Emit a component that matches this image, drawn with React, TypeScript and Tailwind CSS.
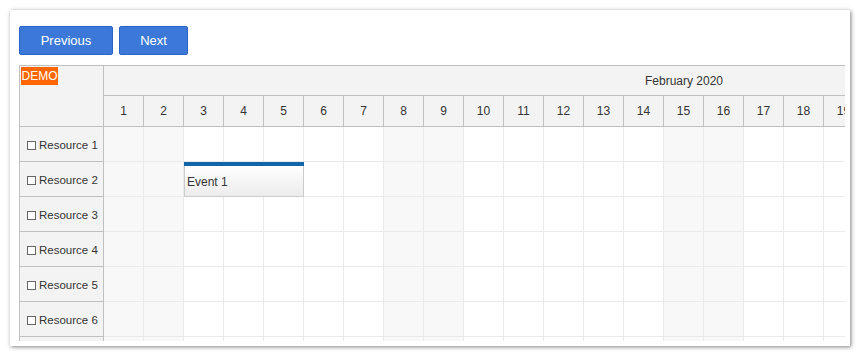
import React from 'react'

// only the days that fit in the visible viewport are drawn; the month header keeps its full 29-day width
const days = Array.from({ length: 19 }, (_, i) => i + 1)
const resources = ['Resource 1', 'Resource 2', 'Resource 3', 'Resource 4', 'Resource 5', 'Resource 6', '']

// Feb 1 2020 is a Saturday
const isWeekend = (d: number) => d % 7 === 1 || d % 7 === 2

export default function App() {
    return (
        <div className="w-[860px] h-[356px] bg-white overflow-hidden" style={{ fontFamily: '"Liberation Sans", Arial, sans-serif' }}>
            <div className="m-[10px] w-[840px] h-[336px] bg-white shadow-[1px_1px_4px_rgba(0,0,0,0.5)] pt-[16px] pl-[9px] flex flex-col">
                <div className="flex gap-[6px]">
                    <button className="w-[94px] h-[29px] rounded-[2px] bg-[#3c78d8] border border-[#2a63c5] text-white text-[13px]">Previous</button>
                    <button className="w-[69px] h-[29px] rounded-[2px] bg-[#3c78d8] border border-[#2a63c5] text-white text-[13px]">Next</button>
                </div>

                <div className="mt-[10px] w-[826px] h-[276px] overflow-hidden flex border-l border-t border-[#c0c0c0] text-[#333]">
                    <div className="w-[84px] shrink-0 flex flex-col">
                        <div className="h-[61px] shrink-0 bg-[#f3f3f3] border-r border-b border-[#c0c0c0] p-[1px]">
                            <div className="w-[37px] h-[18px] bg-[#ff6600] text-white text-[12px] leading-[18px] text-center">DEMO</div>
                        </div>
                        {resources.map((r, i) => (
                            <div key={i} className="h-[35px] shrink-0 bg-[#f3f3f3] border-r border-b border-[#c0c0c0] flex items-center pl-[7px] pt-[3px] gap-[3px] text-[11.5px]">
                                {r && (
                                    <>
                                        <span className="w-[9px] h-[9px] border border-[#666] bg-white" />
                                        <span>{r}</span>
                                    </>
                                )}
                            </div>
                        ))}
                    </div>

                    <div className="flex-1 overflow-hidden">
                        <div className="w-[1160px] relative">
                            <div className="h-[30px] bg-[#f3f3f3] border-b border-[#c0c0c0] flex items-center justify-center text-[12px]">
                                February 2020
                            </div>
                            <div className="h-[31px] flex">
                                {days.map((d) => (
                                    <div key={d} className="w-[40px] shrink-0 bg-[#f3f3f3] border-r border-b border-[#c0c0c0] flex items-center justify-center text-[12px]">
                                        {d}
                                    </div>
                                ))}
                            </div>
                            {resources.map((r, i) => (
                                <div key={i} className="h-[35px] flex">
                                    {days.map((d) => (
                                        <div
                                            key={d}
                                            className={`w-[40px] shrink-0 border-r border-b border-[#eaeaea] ${isWeekend(d) ? 'bg-[#f8f8f8]' : 'bg-white'}`}
                                        />
                                    ))}
                                </div>
                            ))}

                            <div className="absolute left-[80px] top-[96px] w-[120px] h-[35px] flex flex-col">
                                <div className="h-[4px] bg-[#1066a8]" />
                                <div className="flex-1 bg-gradient-to-b from-white to-[#ececec] border-l border-r border-b border-[#cccccc] flex items-center pl-[2px] pt-[1px] text-[12px] text-[#333]">
                                    Event 1
                                </div>
                            </div>
                        </div>
                    </div>
                </div>
            </div>
        </div>
    )
}
